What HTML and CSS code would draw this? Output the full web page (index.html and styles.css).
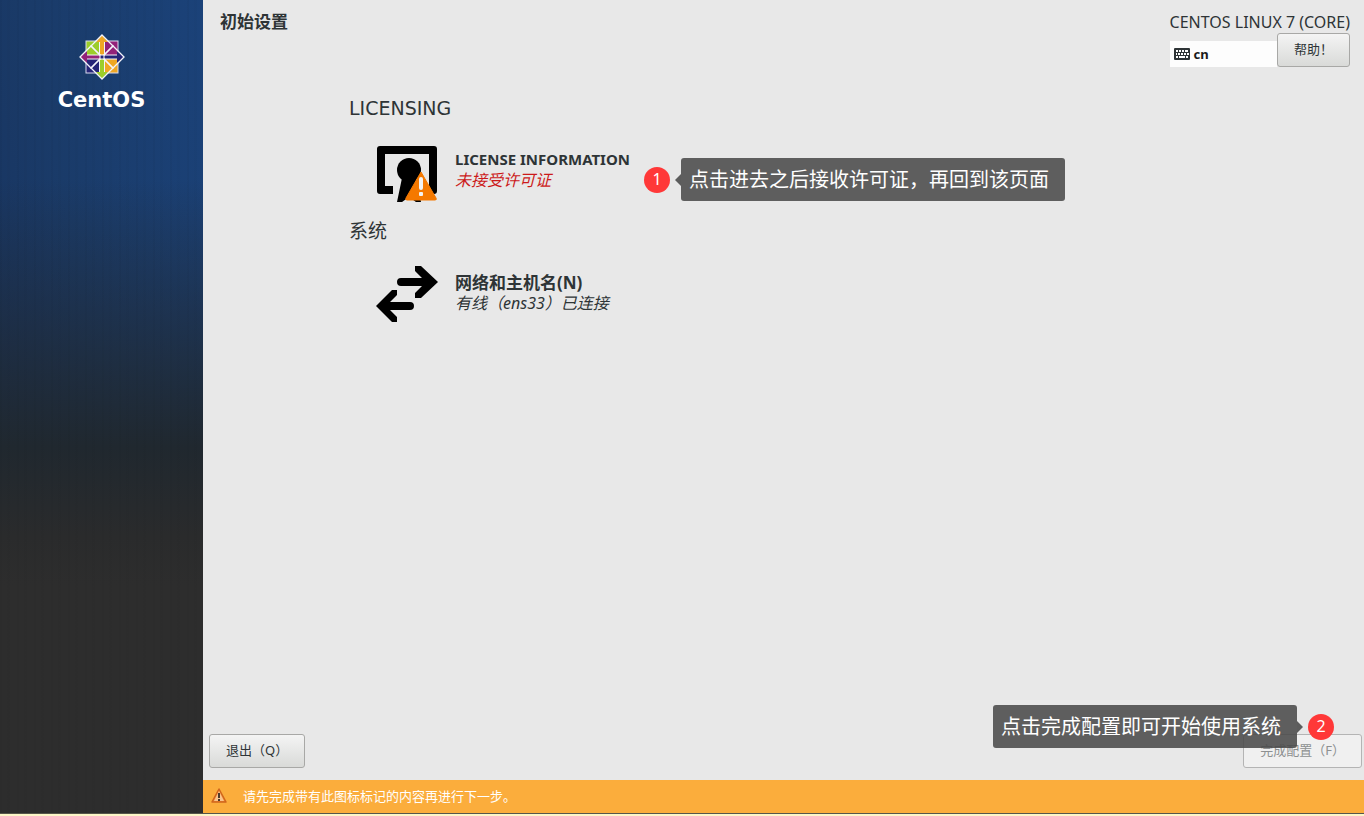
FILE: index.html
```
<!DOCTYPE html>
<html lang="zh-CN">

<head>
    <meta charset="utf-8">
    <title>初始设置</title>
    <link rel="stylesheet" href="styles.css">
</head>

<body>
    <div class="screen">
        <aside class="sidebar">
            <svg class="logo" viewBox="0 0 46 46" aria-hidden="true">
                <g stroke="#dcdcf0" stroke-width="1">
                    <rect x="7" y="7" width="16" height="16" fill="#9ccd2a" />
                    <rect x="23" y="7" width="16" height="16" fill="#932279" />
                    <rect x="7" y="23" width="16" height="16" fill="#262577" />
                    <rect x="23" y="23" width="16" height="16" fill="#efa724" />
                </g>
                <path d="M23 1l6 7h-4v14h-4V8h-4z" fill="#efa724" />
                <path d="M45 23l-7 6v-4H24v-4h14v-4z" fill="#262577" />
                <path d="M23 45l-6-7h4V24h4v14h4z" fill="#9ccd2a" />
                <path d="M1 23l7-6v4h14v4H8v4z" fill="#932279" />
                <g fill="none" stroke="#f4f4fa" stroke-width="1.3">
                    <path d="M23 1l11 11-11 11-11-11z" />
                    <path d="M45 23L34 34 23 23l11-11z" />
                    <path d="M23 45L12 34l11-11 11 11z" />
                    <path d="M1 23l11-11 11 11-11 11z" />
                    <path d="M20.500 8v13H8M25.500 8v13H38M20.500 38V25H8M25.500 38V25h12.500" stroke-width="1" />
                </g>
                <rect x="21" y="21" width="4" height="4" fill="#262577" stroke="#fff" />
            </svg>
            <span class="brand">CentOS</span>
        </aside>

        <main class="main">
            <header class="header">
                <h1>初始设置</h1>
                <div class="header-right">
                    <div class="product">CENTOS LINUX 7 (CORE)</div>
                    <div class="header-tools">
                        <div class="keyboard">
                            <svg width="16" height="12" viewBox="0 0 16 12" aria-hidden="true">
                                <rect width="16" height="12" rx="1" fill="#2e3436" />
                                <path d="M2 3h2m1 0h2m1 0h2m1 0h3M2 6h1m1 0h2m1 0h2m1 0h2m1 0h2M2 9h2m1 0h6m1 0h2" stroke="#fff" stroke-width="1.800" />
                            </svg>
                            <span>cn</span>
                        </div>
                        <button type="button" class="btn">帮助！</button>
                    </div>
                </div>
            </header>

            <div class="content">
                <section>
                    <h2>LICENSING</h2>
                    <div class="spoke">
                        <svg class="spoke-icon" viewBox="0 -4 62 60" aria-hidden="true">
                            <path d="M4 0h54q3 0 3 3v42q0 3-3 3H44v-8h9V8H9v32h8v8H4q-3 0-3-3V3q0-3 3-3z" />
                            <circle cx="33" cy="24" r="12" />
                            <path d="M26 32h14l5 24h-5l-7-5-7 5h-5z" />
                            <path d="M45 26L60 52q1 2-1 2H31q-2 0-1-2z" fill="#f57900" stroke="#f57900" stroke-width="1" stroke-linejoin="round" />
                            <path d="M45 33v9" stroke="#f3f3f3" stroke-width="4" stroke-linecap="round" />
                            <rect x="43" y="46" width="4" height="4" rx="1" fill="#f3f3f3" />
                        </svg>
                        <div class="spoke-text">
                            <h3>LICENSE INFORMATION</h3>
                            <p class="status status-error">未接受许可证</p>
                        </div>
                        <div class="callout callout-license">
                            <span class="badge">1</span>
                            <div class="tip tip-left">点击进去之后接收许可证，再回到该页面</div>
                        </div>
                    </div>
                </section>
                <section>
                    <h2>系统</h2>
                    <div class="spoke">
                        <svg class="spoke-icon" viewBox="0 -1 62 60" aria-hidden="true">
                            <path d="M39 0h6l17 16-17 16h-6v-5l7-7H25q-4 0-4-4t4-4h21l-7-7z" />
                            <path d="M21 24h-5L0 40l16 16h5v-5l-7-7h20q4 0 4-4t-4-4H14l7-7z" />
                        </svg>
                        <div class="spoke-text">
                            <h3 class="name-cjk">网络和主机名(N)</h3>
                            <p class="status">有线（ens33）已连接</p>
                        </div>
                    </div>
                </section>
            </div>

            <footer class="footer">
                <button type="button" class="btn">退出（Q）</button>
                <button type="button" class="btn" disabled>完成配置（F）</button>
                <div class="callout callout-finish">
                    <div class="tip tip-right">点击完成配置即可开始使用系统</div>
                    <span class="badge">2</span>
                </div>
            </footer>

            <div class="warning-bar">
                <svg width="16" height="16" viewBox="0 0 16 16" aria-hidden="true">
                    <path d="M8 1l7 13H1z" fill="#f08a35" stroke="#d0661c" stroke-width="1.500" stroke-linejoin="round" />
                    <path d="M8 3l5 10H3z" fill="#f9c48c" />
                    <path d="M8 5v5M8 11v2" stroke="#4a3a2c" stroke-width="2" />
                </svg>
                <span>请先完成带有此图标标记的内容再进行下一步。</span>
            </div>
        </main>
    </div>
</body>

</html>
```
FILE: styles.css
```
* {
    box-sizing: border-box;
}

body {
    margin: 0;
    background-color: #fdf6c8;
    color: #2e3436;
    font-family: "Noto Sans", "Noto Sans CJK SC", sans-serif;
}

h1,
h2,
h3,
p {
    margin: 0;
}

.screen {
    display: flex;
    min-height: calc(100vh - 2px);
    border-bottom: 1px solid #55564a;
}

/* sidebar */
.sidebar {
    width: 203px;
    flex-shrink: 0;
    display: flex;
    flex-direction: column;
    align-items: center;
    padding-top: 34px;
    background:
        repeating-linear-gradient(to right, rgba(0, 0, 0, 0.03) 0 2px, transparent 2px 7px, rgba(0, 0, 0, 0.02) 7px 10px, transparent 10px 17px),
        linear-gradient(to bottom, transparent 22%, rgba(32, 40, 50, 0.5) 38%, #20282f 55%, #2a2b2c 66%, #2d2d2d 72%),
        linear-gradient(80deg, #17305a, #1a3b69 50%, #1b4279);
}

.logo {
    width: 46px;
    height: 46px;
}

.brand {
    margin-top: 8px;
    color: #fff;
    font: bold 21px/24px "DejaVu Sans", sans-serif;
}

/* main area */
.main {
    flex: 1;
    display: flex;
    flex-direction: column;
    background-color: #e8e8e8;
}

.header {
    display: flex;
    justify-content: space-between;
    padding: 11px 14px 0 17px;
}

.header h1 {
    font-size: 17px;
    line-height: 22px;
}

.product {
    font-size: 16px;
    line-height: 22px;
}

.header-tools {
    display: flex;
    align-items: flex-end;
}

.keyboard {
    flex: 1;
    display: flex;
    align-items: center;
    gap: 4px;
    height: 26px;
    padding-left: 4px;
    background-color: #fdfdfd;
    color: #1a1a1a;
    font-size: 13px;
    font-weight: bold;
}

.btn {
    height: 34px;
    padding: 0 16px 4px;
    border: 1px solid #a8a8a6;
    border-radius: 3px;
    background: linear-gradient(to bottom, #f4f4f4, #d9dad8);
    color: #2e3436;
    font-family: "Noto Sans", "Noto Sans CJK SC", sans-serif;
    font-size: 13px;
}

.btn:disabled {
    background: #f0f0f0;
    border-color: #b4b4b4;
    color: #8d9091;
}

.content {
    flex: 1;
    padding: 27px 0 0 146px;
}

.content h2 {
    font: 19px/28px "DejaVu Sans", "Noto Sans CJK SC", sans-serif;
}

.spoke {
    display: flex;
    align-items: flex-start;
    height: 60px;
    margin: 20px 0 15px 27px;
}

.spoke-icon {
    width: 62px;
    height: 60px;
    margin-right: 17px;
}

.spoke-text {
    padding-top: 7px;
}

.spoke-text h3 {
    font-size: 15px;
    line-height: 21px;
}

.spoke-text .name-cjk {
    font-size: 17px;
}

.status {
    font-size: 16px;
    font-style: italic;
    line-height: 21px;
}

.status-error {
    color: #cc1a1a;
}

/* numbered callouts */
.callout {
    display: flex;
    align-items: center;
    gap: 11px;
}

.callout-license {
    margin: 16px 0 0 14px;
}

.badge {
    width: 26px;
    height: 26px;
    border-radius: 50%;
    background-color: #ff3838;
    color: #fff;
    font-size: 16px;
    line-height: 24px;
    text-align: center;
}

.tip {
    position: relative;
    padding: 7px 16px 8px 8px;
    border-radius: 3px;
    background-color: rgba(74, 74, 74, 0.88);
    color: #fff;
    font-family: "Noto Sans CJK SC", sans-serif;
    font-size: 20px;
    line-height: 28px;
    white-space: nowrap;
}

.tip::before {
    content: "";
    position: absolute;
    top: 16px;
    border: 6px solid transparent;
}

.tip-left::before {
    right: 100%;
    border-left-width: 0;
    border-right-color: #5c5c5c;
}

.tip-right::before {
    left: 100%;
    border-right-width: 0;
    border-left-color: #5c5c5c;
}

.footer {
    position: relative;
    display: flex;
    justify-content: space-between;
    padding: 0 2px 12px 6px;
}

.callout-finish {
    position: absolute;
    right: 30px;
    bottom: 32px;
}

.warning-bar {
    display: flex;
    align-items: center;
    gap: 16px;
    height: 33px;
    padding: 0 8px 2px;
    background-color: #fbad3c;
    color: #fff;
    font-size: 13px;
}
```
